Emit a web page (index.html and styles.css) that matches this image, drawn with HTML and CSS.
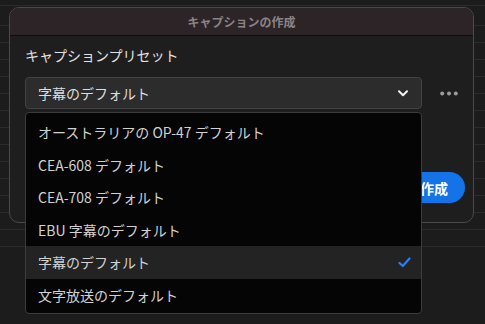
FILE: index.html
```html
<!DOCTYPE html>
<html lang="ja">
<head>
    <meta charset="UTF-8">
    <title>キャプションの作成</title>
    <link rel="stylesheet" href="styles.css">
</head>
<body>
    <div id="timeline"></div>

    <div id="dialog">
        <div class="dialog-title">キャプションの作成</div>
        <div class="dialog-body">
            <div class="field-label">キャプションプリセット</div>
            <div class="select-row">
                <div class="select">
                    <span>字幕のデフォルト</span>
                    <svg class="chevron" width="10" height="7" viewBox="0 0 10 7">
                        <path d="M1 1.2 L5 5.2 L9 1.2" fill="none" stroke="#f2f2f2" stroke-width="2" stroke-linecap="round" stroke-linejoin="round"/>
                    </svg>
                </div>
                <svg class="more" width="18" height="5" viewBox="0 0 18 5">
                    <circle cx="2.2" cy="2.5" r="2" fill="#9c9c9c"/>
                    <circle cx="9" cy="2.5" r="2" fill="#9c9c9c"/>
                    <circle cx="15.8" cy="2.5" r="2" fill="#9c9c9c"/>
                </svg>
            </div>
            <div class="actions">
                <button class="primary">作成</button>
            </div>
        </div>
    </div>

    <!-- 展開されたプリセット一覧 -->
    <ul id="preset-menu">
        <li>オーストラリアの OP-47 デフォルト</li>
        <li>CEA-608 デフォルト</li>
        <li>CEA-708 デフォルト</li>
        <li>EBU 字幕のデフォルト</li>
        <li class="selected">字幕のデフォルト
            <svg class="check" width="13" height="11" viewBox="0 0 13 11">
                <path d="M1.5 6 L4.8 9 L11.5 1.5" fill="none" stroke="#2d7ff0" stroke-width="2.2" stroke-linecap="round" stroke-linejoin="round"/>
            </svg>
        </li>
        <li>文字放送のデフォルト</li>
    </ul>
</body>
</html>
```

FILE: styles.css
```css
body {
    margin: 0;
    width: 485px;
    height: 324px;
    overflow: hidden;
    background-color: #1c1c1c;
    font-family: "Noto Sans CJK JP", "Noto Sans", sans-serif;
}
#timeline {
    height: 258px;
    background: repeating-linear-gradient(to bottom, transparent 0 16px, #2b2b2b 16px 17px);
    background-position: 0 9px;
}
#dialog {
    position: absolute;
    left: 9px;
    top: 7px;
    width: 463px;
    height: 214px;
    border: 1px solid #4a4a4a;
    border-radius: 10px;
    background-color: #1e1e1e;
    overflow: hidden;
}
.dialog-title {
    height: 27px;
    line-height: 27px;
    background-color: #2d2427;
    border-bottom: 1px solid #0d0d0d;
    text-align: center;
    font-size: 12px;
    font-weight: bold;
    color: #8a8385;
}
.dialog-body {
    padding: 8px 8px 0 15px;
}
.field-label {
    height: 22px;
    line-height: 22px;
    font-size: 14px;
    color: #e2e2e2;
}
.select-row {
    display: flex;
    align-items: center;
    margin-top: 11px;
}
.select {
    width: 370px;
    height: 30px;
    border: 1px solid #434343;
    border-radius: 4px;
    background-color: #2c2c2c;
    display: flex;
    align-items: center;
    justify-content: space-between;
    padding: 0 13px 0 12px;
    font-size: 14px;
    color: #dedede;
}
.more {
    margin-left: 18px;
}
.actions {
    display: flex;
    justify-content: flex-end;
    margin-top: 63px;
}
button.primary {
    height: 31px;
    padding: 0 17px 0 16px;
    border: none;
    border-radius: 16px;
    background-color: #1473e6;
    color: #ffffff;
    font-family: inherit;
    font-size: 14px;
    font-weight: bold;
}
#preset-menu {
    position: absolute;
    left: 25px;
    top: 112px;
    width: 395px;
    height: 195px;
    margin: 0;
    padding: 3px 0 2px;
    list-style: none;
    border: 1px solid #3c3c3c;
    border-radius: 4px;
    background-color: #050505;
}
#preset-menu li {
    height: 32.5px;
    display: flex;
    align-items: center;
    justify-content: space-between;
    padding: 0 10px 0 12px;
    font-size: 14px;
    color: #d2d2d2;
}
#preset-menu li.selected {
    background-color: #232323;
}
```
